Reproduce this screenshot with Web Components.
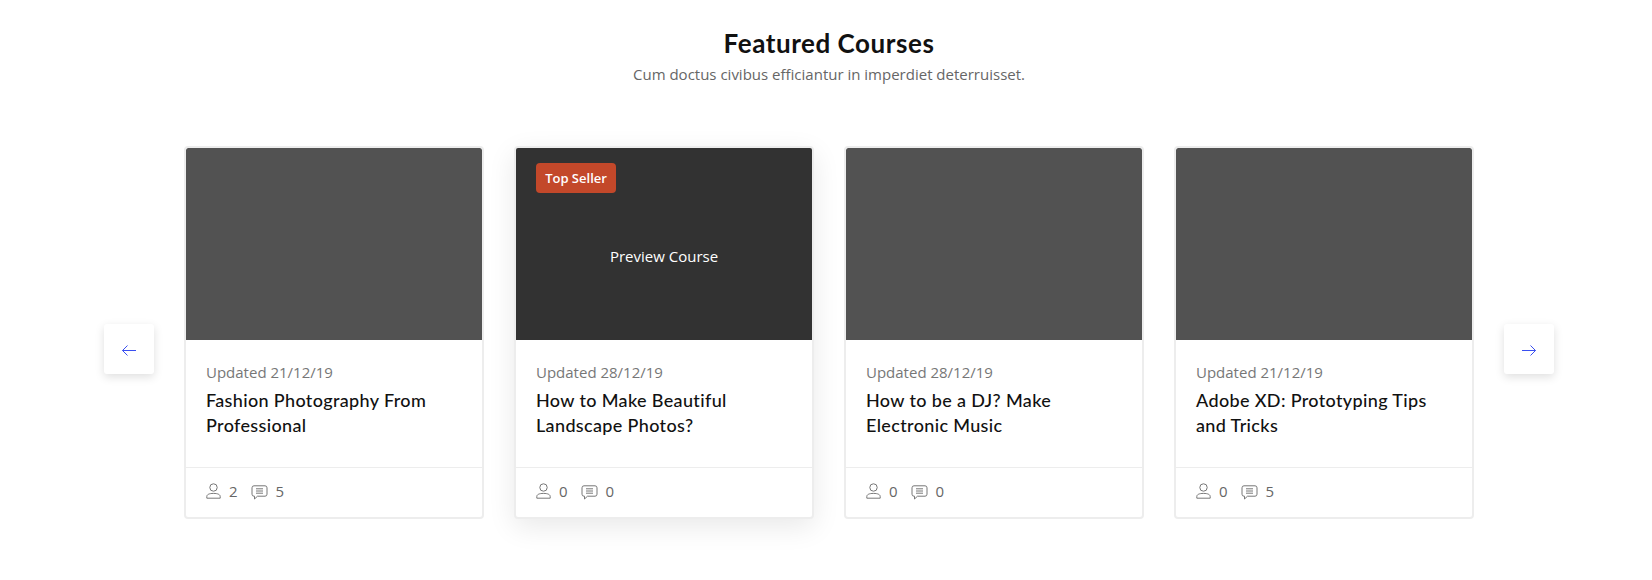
<!DOCTYPE html>
<html lang="en">
<head>
<meta charset="utf-8">
<title>Featured Courses</title>
<style>
  html, body { margin: 0; background: #fff; }
</style>
</head>
<body>
<featured-courses>
  <course-card updated="21/12/19" title-text="Fashion Photography From Professional" students="2" comments="5"></course-card>
  <course-card updated="28/12/19" title-text="How to Make Beautiful Landscape Photos?" students="0" comments="0" active></course-card>
  <course-card updated="28/12/19" title-text="How to be a DJ? Make Electronic Music" students="0" comments="0"></course-card>
  <course-card updated="21/12/19" title-text="Adobe XD: Prototyping Tips and Tricks" students="0" comments="5"></course-card>
</featured-courses>

<script>
class NavArrow extends HTMLElement {
    connectedCallback() {
        const path = this.getAttribute('dir') === 'next'
            ? 'M1 7.5H14.5M9.5 2.5L14.5 7.5L9.5 12.5'
            : 'M15 7.5H1.5M6.5 2.5L1.5 7.5L6.5 12.5';
        this.attachShadow({ mode: 'open' });
        this.shadowRoot.innerHTML = `
            <style>
                :host {
                    display: flex;
                    flex: none;
                    align-items: center;
                    justify-content: center;
                    align-self: flex-start;
                    width: 50px;
                    height: 50px;
                    margin-top: 178px;
                    background: #fff;
                    border-radius: 3px;
                    box-shadow: 0 3px 10px rgba(0, 0, 0, .13);
                }
                svg { width: 16px; height: 15px; margin-top: 3px; }
            </style>
            <svg viewBox="0 0 16 15" fill="none" stroke="#3a4ff0" stroke-width="1"><path d="${path}"/></svg>
        `;
    }
}

class CourseCard extends HTMLElement {
    connectedCallback() {
        const active = this.hasAttribute('active');
        this.attachShadow({ mode: 'open' });
        this.shadowRoot.innerHTML = `
            <style>
                :host {
                    display: flex;
                    flex-direction: column;
                    flex: none;
                    box-sizing: border-box;
                    width: 300px;
                    height: 373px;
                    background: #fff;
                    border: 2px solid #ededed;
                    border-radius: 4px;
                    overflow: hidden;
                }
                :host([active]) {
                    overflow: visible;
                    box-shadow: 0 8px 28px rgba(0, 0, 0, .09);
                }
                .thumb {
                    position: relative;
                    display: flex;
                    align-items: center;
                    justify-content: center;
                    box-sizing: border-box;
                    height: 192px;
                    padding-top: 24px;
                    background: ${active ? '#323232' : '#525252'};
                    border-radius: 2px 2px 0 0;
                    color: #fff;
                    font: 15px/20px "Open Sans", sans-serif;
                }
                .badge {
                    position: absolute;
                    left: 20px;
                    top: 15px;
                    width: 80px;
                    height: 30px;
                    box-sizing: border-box;
                    background: #c3482a;
                    border-radius: 4px;
                    font: 600 13px/30px "Open Sans", sans-serif;
                    text-align: center;
                }
                .body {
                    flex: 1;
                    padding: 22px 20px 0;
                }
                .updated {
                    color: #777;
                    font: 15px/20px "Open Sans", sans-serif;
                }
                .name {
                    margin: 6px 0 0;
                    color: #111;
                    font: 500 18px/25px Lato, sans-serif;
                    letter-spacing: .35px;
                }
                .stats {
                    display: flex;
                    align-items: center;
                    box-sizing: border-box;
                    height: 50px;
                    padding: 0 20px 3px;
                    border-top: 1px solid #ededed;
                    color: #666;
                    font: 15px/20px "Open Sans", sans-serif;
                }
                .stats svg { flex: none; }
                .stats span { margin: 0 13px 0 8px; }
                .bubble { margin-top: 2px; }
            </style>
            <div class="thumb">
                ${active ? '<div class="badge">Top Seller</div><div>Preview Course</div>' : ''}
            </div>
            <div class="body">
                <div class="updated">Updated ${this.getAttribute('updated')}</div>
                <h3 class="name">${this.getAttribute('title-text')}</h3>
            </div>
            <div class="stats">
                <svg width="15" height="16" viewBox="0 0 15 16" fill="none" stroke="#777" stroke-width="1">
                    <circle cx="7.5" cy="4.5" r="3.7"/>
                    <path d="M.8 15.2V13.6C.8 11.6 3 10.4 7.5 10.4S14.2 11.6 14.2 13.6V15.2Z"/>
                </svg>
                <span>${this.getAttribute('students')}</span>
                <svg class="bubble" width="17" height="15" viewBox="0 0 17 15" fill="none" stroke="#777" stroke-width="1">
                    <path d="M3 .8H14A2 2 0 0 1 16 2.8V9.2A2 2 0 0 1 14 11.2H6.5L3.5 14V11.2H3A2 2 0 0 1 1 9.2V2.8A2 2 0 0 1 3 .8Z"/>
                    <path d="M5 3.8H12M5 6H12M5 8.2H12"/>
                </svg>
                <span>${this.getAttribute('comments')}</span>
            </div>
        `;
    }
}

class FeaturedCourses extends HTMLElement {
    connectedCallback() {
        this.attachShadow({ mode: 'open' });
        this.shadowRoot.innerHTML = `
            <style>
                :host {
                    display: block;
                    box-sizing: border-box;
                    height: 580px;
                    padding: 26px 0 0 104px;
                }
                .head { width: 1450px; text-align: center; }
                h2 {
                    margin: 0;
                    color: #111;
                    font: 700 26px/34px Lato, sans-serif;
                    letter-spacing: .55px;
                }
                p {
                    margin: 4px 0 0;
                    color: #666;
                    font: 15px/20px "Open Sans", sans-serif;
                }
                .row {
                    display: flex;
                    gap: 30px;
                    margin-top: 62px;
                }
            </style>
            <div class="head">
                <h2>Featured Courses</h2>
                <p>Cum doctus civibus efficiantur in imperdiet deterruisset.</p>
            </div>
            <div class="row">
                <nav-arrow dir="prev"></nav-arrow>
                <slot></slot>
                <nav-arrow dir="next"></nav-arrow>
            </div>
        `;
    }
}

customElements.define('nav-arrow', NavArrow);
customElements.define('course-card', CourseCard);
customElements.define('featured-courses', FeaturedCourses);
</script>
</body>
</html>
